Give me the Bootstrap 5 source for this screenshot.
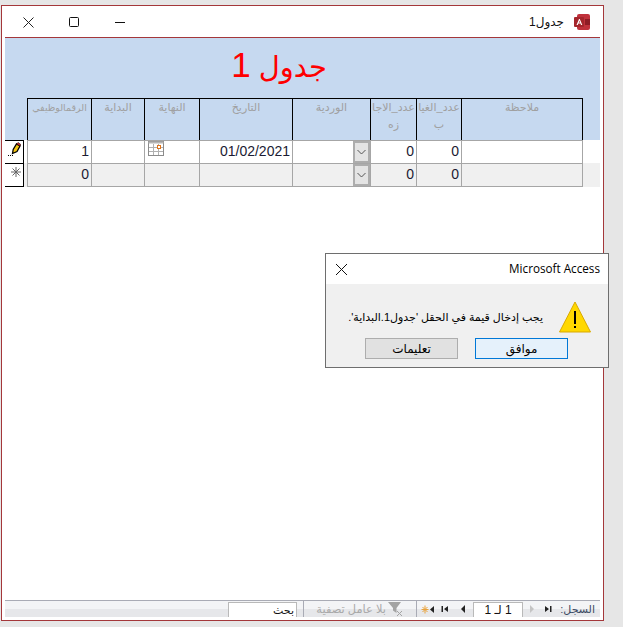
<!DOCTYPE html>
<html lang="ar" dir="rtl">
<head>
  <meta charset="UTF-8" />
  <meta name="viewport" content="width=device-width, initial-scale=1" />
  <title>جدول1</title>
  <link href="https://cdn.jsdelivr.net/npm/bootstrap@5.3.2/dist/css/bootstrap.min.css" rel="stylesheet" />
  <style>
    html, body {
      height: 100%;
    }

    body {
      background-color: #e6e6e6;
      font-family: "Liberation Sans", "DejaVu Sans", sans-serif;
      font-size: 12px;
      color: #111;
      padding: 5px 19px 0 0;
      overflow: hidden;
    }

    .app-window {
      width: 603px;
      height: 616px;
      background: #fff;
      border: 1px solid #a4373a;
      padding: 0 3px;
    }

    .title-bar {
      height: 32px;
      border-bottom: 1px solid #a4373a;
    }

    .win-title { margin-right: 10px; font-size: 12px; }
    .app-logo { margin-right: 10px; }
    .win-btn { width: 46px; }

    .form-head {
      height: 102px;
      background: #c6d9f0;
      padding-right: 17px;
    }

    .form-title {
      height: 60px;
      padding: 6px 30px 0 0;
      color: #f00;
      font-size: 29px;
      line-height: 42px;
      text-align: center;
      font-weight: 400;
      margin: 0;
    }

    .form-title span { font-size: 35px; }

    .sheet-cols {
      display: grid;
      grid-template-columns: 121px 45px 46px 78px 93px 55px 53px 65px;
      width: 556px;
    }

    .head-cols { height: 42px; }

    .head-cell {
      border-top: 1px solid #000;
      border-right: 1px solid #000;
      color: #a0a0a0;
      font-size: 11px;
      line-height: 17px;
      text-align: center;
      overflow: hidden;
    }

    .head-cell:last-child { border-left: 1px solid #000; font-size: 9.5px; }

    .sheet-row {
      height: 23px;
      padding-right: 17px;
      display: flex;
      align-items: stretch;
      position: relative;
    }

    .sheet-row.is-new { background: #f0f0f0; }

    .data-cell {
      border-top: 1px solid #a6a6a6;
      border-right: 1px solid #a6a6a6;
      font-size: 14px;
      line-height: 21px;
      padding: 0 2px;
      color: #1b1b33;
      text-align: right;
      position: relative;
    }

    .data-cell:last-child { border-left: 1px solid #a6a6a6; }
    .is-last { height: 24px; }
    .is-last .data-cell { border-bottom: 1px solid #a6a6a6; }
    .dir-ltr { direction: ltr; }

    .combo-btn {
      position: absolute;
      right: 0;
      top: 0;
      width: 17px;
      height: 100%;
      background: #e4e4e4;
      border: 2px solid #adadad;
      display: flex;
      align-items: center;
      justify-content: center;
    }

    .date-pick {
      position: absolute;
      left: 3px;
      top: 0;
    }

    .row-mark {
      position: absolute;
      left: 0;
      top: 0;
      width: 19px;
      height: 23px;
      border: 1px solid #000;
      border-left: 0;
      border-bottom: 0;
      background: #fff;
      display: flex;
      align-items: flex-start;
      justify-content: center;
      padding-top: 1px;
    }

    .is-last .row-mark { height: 24px; border-bottom: 1px solid #000; padding-top: 3px; }
    .star-mark { margin-left: 3px; }

    .nav-bar {
      height: 17px;
      border-top: 1px solid #a9abb5;
      background: linear-gradient(#f3f4f6 0 50%, #e6e7ea 50% 100%);
      font-size: 11px;
      line-height: 16px;
      color: #3c4a63;
      margin-bottom: 3px;
    }

    .nav-label { width: 44px; padding-right: 5px; white-space: nowrap; }
    .nav-ico { display: flex; align-items: center; justify-content: center; height: 16px; }
    .slot-first { width: 16px; }
    .slot-prev { width: 17px; }
    .slot-next { width: 21px; }
    .slot-last { width: 14px; }
    .slot-new { width: 21px; }
    .slot-filter { width: 30px; justify-content: flex-start; padding-right: 12px; }

    .rec-box, .search-box {
      height: 15px;
      margin-top: 1px;
      background: #fff;
      border: 1px solid #b9b9b9;
      border-bottom: 0;
      color: #111;
      line-height: 14px;
    }

    .rec-box { width: 50px; font-size: 12px; text-align: center; }
    .search-box { width: 69px; padding-right: 2px; margin-right: 6px; }
    .nav-sep { width: 1px; height: 16px; background: #a9abb5; }
    .filter-txt { width: 82px; font-size: 11.4px; color: #a9a9a9; white-space: nowrap; }

    .msg-box {
      position: absolute;
      left: 325px;
      top: 253px;
      width: 284px;
      height: 115px;
      background: #f0f0f0;
      border: 1px solid #6e6e6e;
    }

    .msg-head {
      height: 30px;
      background: #fff;
      padding: 0 8px 0 9px;
    }

    .msg-name { font-size: 11.7px; color: #000; font-family: "Open Sans", "Liberation Sans", sans-serif; }
    .msg-text { font-size: 11px; color: #000; }
    .msg-body { padding: 12px 17px 0 0; height: 54px; }

    .msg-btn {
      width: 93px;
      height: 21px;
      font-size: 12px;
      line-height: 21px;
      text-align: center;
      color: #000;
      border: 1px solid #adadad;
      background: #e1e1e1;
    }

    .msg-btn.is-default { background: #e5f1fb; border-color: #0078d7; }
    .msg-foot { padding-right: 40px; gap: 17px; }
  </style>
</head>
<body>
  <div class="app-window d-flex flex-column">
    <div class="title-bar d-flex align-items-center">
      <svg class="app-logo" width="16" height="16" viewBox="0 0 16 16">
        <rect x="3" y="0" width="13" height="16" rx="2" fill="#c0313b"/>
        <rect x="11" y="5" width="5" height="6" fill="#8e1c25"/>
        <rect x="0" y="3" width="10" height="10" rx="1" fill="#a4262c"/>
        <path d="M2.500 11 5 5h.8l2.500 6H7l-.5-1.400H4.400L3.800 11zM4.800 8.600h1.400L5.500 6.800z" fill="#fff"/>
      </svg>
      <span class="win-title">جدول1</span>
      <div class="me-auto d-flex">
        <div class="win-btn text-center"><svg width="10" height="10" viewBox="0 0 10 10"><path d="M0 5.500h10" stroke="#111"/></svg></div>
        <div class="win-btn text-center"><svg width="10" height="10" viewBox="0 0 10 10"><rect x=".5" y=".5" width="9" height="9" rx="1" fill="none" stroke="#111"/></svg></div>
        <div class="win-btn text-center"><svg width="11" height="11" viewBox="0 0 11 11"><path d="M.5.5l10 10M10.500.5l-10 10" stroke="#222"/></svg></div>
      </div>
    </div>

    <div class="form-head">
      <h1 class="form-title">جدول <span>1</span></h1>
      <div class="sheet-cols head-cols">
        <div class="head-cell">ملاحظة</div>
        <div class="head-cell">عدد_الغيا<br>ب</div>
        <div class="head-cell">عدد_الاجا<br>زه</div>
        <div class="head-cell">الوردية</div>
        <div class="head-cell">التاريخ</div>
        <div class="head-cell">النهاية</div>
        <div class="head-cell">البداية</div>
        <div class="head-cell">الرقمالوظيفي</div>
      </div>
    </div>

    <div class="sheet-row">
      <div class="sheet-cols">
        <div class="data-cell"></div>
        <div class="data-cell dir-ltr">0</div>
        <div class="data-cell dir-ltr">0</div>
        <div class="data-cell"><span class="combo-btn"><svg width="9" height="6" viewBox="0 0 9 6"><path d="M.5 1l4 4 4-4" fill="none" stroke="#555"/></svg></span></div>
        <div class="data-cell dir-ltr">01/02/2021</div>
        <div class="data-cell">
          <svg class="date-pick" width="16" height="15" viewBox="0 0 16 15">
            <rect x=".5" y=".5" width="15" height="14" fill="#fff" stroke="#8b8b8b"/>
            <rect x=".5" y=".5" width="15" height="2" fill="#b5b5b5"/>
            <path d="M5.500 3v11M10.500 3v11M1 6.500h14M1 10.500h14" stroke="#b0b0b0"/>
            <rect x="9.500" y="4.500" width="3" height="3" fill="#fff" stroke="#e0741a"/>
          </svg>
        </div>
        <div class="data-cell"></div>
        <div class="data-cell dir-ltr">1</div>
      </div>
      <div class="row-mark">
        <svg width="13" height="15" viewBox="0 0 13 15">
          <path d="M4.500 11.500l.7-4L8.500 2l3.500 2L9 9.500z" fill="#f6c611" stroke="#000" stroke-width="1.300"/>
          <path d="M8.500 2l3.500 2 .8-1.500L10 .5z" fill="#e0302a" stroke="#000" stroke-width=".6"/>
          <path d="M0 13.500h1M2 13.500h1M4 13.500h1" stroke="#000"/>
        </svg>
      </div>
    </div>
    <div class="sheet-row is-new is-last">
      <div class="sheet-cols">
        <div class="data-cell"></div>
        <div class="data-cell dir-ltr">0</div>
        <div class="data-cell dir-ltr">0</div>
        <div class="data-cell"><span class="combo-btn"><svg width="9" height="6" viewBox="0 0 9 6"><path d="M.5 1l4 4 4-4" fill="none" stroke="#555"/></svg></span></div>
        <div class="data-cell"></div>
        <div class="data-cell"></div>
        <div class="data-cell"></div>
        <div class="data-cell dir-ltr">0</div>
      </div>
      <div class="row-mark">
        <svg class="star-mark" width="10" height="10" viewBox="0 0 10 10"><path d="M5 0v10M0 5h10M1.500 1.500l7 7M8.500 1.500l-7 7" stroke="#666"/></svg>
      </div>
    </div>

    <div class="flex-grow-1"></div>

    <div class="nav-bar d-flex align-items-start">
      <div class="nav-label">السجل:</div>
      <div class="nav-ico slot-first"><svg width="8" height="8" viewBox="0 0 8 8"><path d="M1 1l4 3-4 3zM6 1h1.500v6H6z" fill="#222"/></svg></div>
      <div class="nav-ico slot-prev"><svg width="6" height="8" viewBox="0 0 6 8"><path d="M1 0l4 4-4 4z" fill="#c4c4c4"/></svg></div>
      <div class="rec-box">1 لـ 1</div>
      <div class="nav-ico slot-next"><svg width="6" height="8" viewBox="0 0 6 8"><path d="M5 0L1 4l4 4z" fill="#222"/></svg></div>
      <div class="nav-ico slot-last"><svg width="8" height="8" viewBox="0 0 8 8"><path d="M7 1L3 4l4 3zM.5 1H2v6H.5z" fill="#222"/></svg></div>
      <div class="nav-ico slot-new"><svg width="14" height="9" viewBox="0 0 14 9"><path d="M13 1L9 4.500 13 8z" fill="#222"/><path d="M4 .5v8M.5 4.500h7M1.500 2l5 5M6.500 2l-5 5" stroke="#e9a23b"/></svg></div>
      <div class="nav-sep"></div>
      <div class="nav-ico slot-filter"><svg width="16" height="15" viewBox="0 0 16 15"><path d="M0 0h13L8.500 6v5L5 8.500V6z" fill="#a3a3a3"/><path d="M9 9l5 5M14 9l-5 5" stroke="#a3a3a3"/></svg></div>
      <div class="filter-txt">بلا عامل تصفية</div>
      <div class="nav-sep"></div>
      <div class="search-box">بحث</div>
    </div>
  </div>

  <div class="msg-box">
    <div class="msg-head d-flex align-items-center justify-content-between">
      <span class="msg-name" dir="ltr">Microsoft Access</span>
      <svg width="13" height="13" viewBox="0 0 13 13"><path d="M1 1l11 11M12 1L1 12" stroke="#111"/></svg>
    </div>
    <div class="msg-body d-flex align-items-center">
      <svg class="ms-3" width="32" height="32" viewBox="0 0 32 32">
        <path d="M16 1l15.500 30H.5z" fill="#ffd800" stroke="#d9a900"/>
        <path d="M15 10h2v13h-2zM15 25h2v2h-2z" fill="#000"/>
      </svg>
      <span class="msg-text">يجب إدخال قيمة في الحقل 'جدول1.البداية'.</span>
    </div>
    <div class="msg-foot d-flex">
      <div class="msg-btn is-default">موافق</div>
      <div class="msg-btn">تعليمات</div>
    </div>
  </div>

  <script src="https://cdn.jsdelivr.net/npm/bootstrap@5.3.2/dist/js/bootstrap.bundle.min.js"></script>
</body>
</html>
